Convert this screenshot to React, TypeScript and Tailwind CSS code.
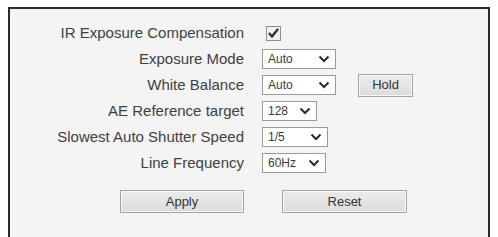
const font = { fontFamily: '"Liberation Sans", Arial, sans-serif' };

function Chevron() {
  return (
    <svg width="12" height="8" viewBox="0 0 12 8" className="shrink-0" aria-hidden>
      <path d="M1.5 1.5 L6 6 L10.5 1.5" fill="none" stroke="#2b2b2b" strokeWidth="2" />
    </svg>
  );
}

function FakeSelect({ value, width }: { value: string; width: string }) {
  return (
    <div
      className={`flex h-[20px] items-center justify-between border border-[#9a9a9a] bg-white pl-[5px] pr-[5px] text-[12px] text-[#3a3a3a] ${width}`}
    >
      <span>{value}</span>
      <Chevron />
    </div>
  );
}

function Row({ label, children }: { label: string; children: React.ReactNode }) {
  return (
    <div className="flex h-[26px] items-center">
      <div className="w-[234px] text-right text-[15px] text-[#404040]">{label}</div>
      <div className="ml-[18px] flex items-center">{children}</div>
    </div>
  );
}

function GrayButton({ label, width }: { label: string; width: string }) {
  return (
    <div
      className={`flex h-[23px] items-center justify-center border border-[#a3a3a3] bg-gradient-to-b from-[#ececec] to-[#dcdcdc] text-[13px] text-[#333] shadow-[inset_0_0_0_1px_#f7f7f7] ${width}`}
    >
      {label}
    </div>
  );
}

export default function App() {
  return (
    <div className="h-[237px] w-[498px] overflow-hidden bg-white pl-[8px] pt-[7px]" style={font}>
      <div className="h-[260px] w-[482px] border-2 border-[#2a2a2a] bg-[#f4f4f4] pt-[11px]">
        <Row label="IR Exposure Compensation">
          <div className="ml-[4px] flex h-[15px] w-[15px] items-center justify-center border border-[#8f8f8f] bg-[#f0f0f0]">
            <svg width="11" height="10" viewBox="0 0 11 10" aria-hidden>
              <path d="M1 5 L4 8.5 L10 1" fill="none" stroke="#2a2a2a" strokeWidth="2.2" />
            </svg>
          </div>
        </Row>
        <Row label="Exposure Mode">
          <FakeSelect value="Auto" width="w-[74px]" />
        </Row>
        <Row label="White Balance">
          <FakeSelect value="Auto" width="w-[74px]" />
          <div className="ml-[22px]">
            <GrayButton label="Hold" width="w-[55px]" />
          </div>
        </Row>
        <Row label="AE Reference target">
          <FakeSelect value="128" width="w-[55px]" />
        </Row>
        <Row label="Slowest Auto Shutter Speed">
          <FakeSelect value="1/5" width="w-[66px]" />
        </Row>
        <Row label="Line Frequency">
          <FakeSelect value="60Hz" width="w-[64px]" />
        </Row>
        <div className="mt-[14px] flex pl-[110px]">
          <GrayButton label="Apply" width="w-[124px]" />
          <div className="ml-[38px]">
            <GrayButton label="Reset" width="w-[125px]" />
          </div>
        </div>
      </div>
    </div>
  );
}
